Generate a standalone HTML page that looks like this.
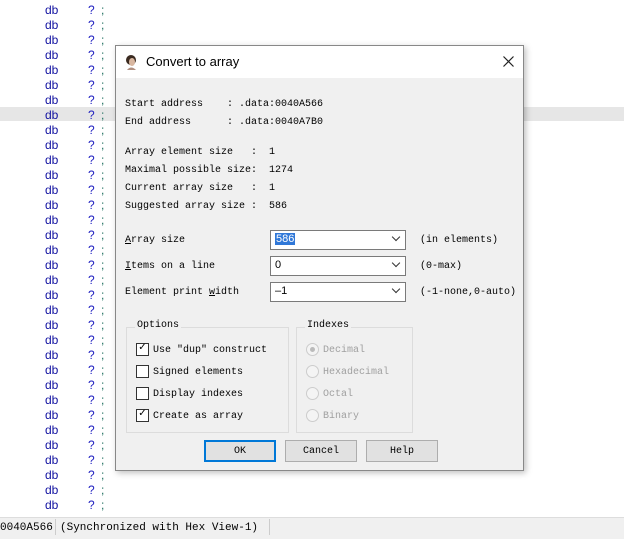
<!DOCTYPE html>
<html><head><style>
body{margin:0;width:624px;height:538px;background:#fff;position:relative;overflow:hidden;font-family:"Liberation Mono",monospace;}
.r{position:absolute;left:0;width:624px;height:15px;font:12px "Liberation Sans",sans-serif;}
.r span{position:absolute;top:1px}
.a{position:absolute;font-size:10px;color:#000;white-space:pre}
.dlg{position:absolute;left:115px;top:45px;width:407px;height:424px;background:#f0f0f0;border:1px solid #888;box-shadow:2px 2px 6px rgba(0,0,0,.25)}
.tb{position:absolute;left:0;top:0;width:407px;height:32px;background:#fff}
.cb{position:absolute;left:154px;width:134px;height:18px;background:#fff;border:1px solid #7a7a7a}
.cb i{position:absolute;right:6px;top:3px;width:5px;height:5px;border-right:1px solid #333;border-bottom:1px solid #333;transform:rotate(45deg)}
.grp{position:absolute;border:1px solid #dcdcdc}
.grp b{position:absolute;top:-8px;left:8px;background:#f0f0f0;font-weight:normal;font-size:10px;padding:0 2px}
.ck{position:absolute;width:11px;height:11px;border:1px solid #333;background:#fff}
.rd{position:absolute;width:11px;height:11px;border:1px solid #ccc;border-radius:50%;background:#f4f4f4}
.btn{position:absolute;top:394px;width:70px;height:20px;border:1px solid #adadad;background:#e1e1e1;text-align:center;line-height:22px;font-size:10px}
</style></head><body>
<div style="position:absolute;left:0;top:107px;width:624px;height:14px;background:#e6e6e6"></div>
<div id="rows"></div>
<script>
var h='';for(var i=0;i<34;i++){h+='<div class="r" style="top:'+(2+i*15)+'px"><span style="left:45px;color:#1010a0">db</span><span style="left:88px;color:#2020c0">?</span><span style="left:101px;color:#207060">;</span></div>';}
document.getElementById('rows').innerHTML=h;
</script>
<div style="position:absolute;left:0;top:517px;width:624px;height:21px;background:#f0f0f0;border-top:1px solid #ddd"></div>
<div class="a" style="left:0;top:522px;font-size:11px">0040A566</div>
<div style="position:absolute;left:55px;top:519px;width:1px;height:16px;background:#ccc"></div>
<div class="a" style="left:60px;top:522px;font-size:11px">(Synchronized with Hex View-1)</div>
<div style="position:absolute;left:269px;top:519px;width:1px;height:16px;background:#ccc"></div>

<div class="dlg">
<div class="tb">
<svg style="position:absolute;left:8px;top:8px" width="14" height="16"><ellipse cx="7" cy="6" rx="5" ry="5" fill="#3a2a20"/><ellipse cx="8" cy="8" rx="3" ry="4" fill="#d9b7a0"/><path d="M3 16 Q7 11 12 16Z" fill="#b08f80"/></svg>
<div style="position:absolute;left:30px;top:8px;font:13px 'Liberation Sans',sans-serif">Convert to array</div>
<svg style="position:absolute;left:387px;top:10px" width="11" height="11"><path d="M0.5 0.5L10.5 10.5M10.5 0.5L0.5 10.5" stroke="#222" stroke-width="1.2"/></svg>
</div>
<div class="a" style="left:9px;top:53px">Start address    : .data:0040A566</div>
<div class="a" style="left:9px;top:71px">End address      : .data:0040A7B0</div>
<div class="a" style="left:9px;top:101px">Array element size   :  1</div>
<div class="a" style="left:9px;top:119px">Maximal possible size:  1274</div>
<div class="a" style="left:9px;top:137px">Current array size   :  1</div>
<div class="a" style="left:9px;top:155px">Suggested array size :  586</div>
<div class="a" style="left:9px;top:189px"><u>A</u>rray size</div>
<div class="a" style="left:9px;top:215px"><u>I</u>tems on a line</div>
<div class="a" style="left:9px;top:241px">Element print <u>w</u>idth</div>
<div class="cb" style="top:184px"><span style="position:absolute;left:4px;top:2px;background:#3078d8;color:#fff;font:11px 'Liberation Sans',sans-serif;padding:0 1px">586</span><i></i></div>
<div class="cb" style="top:210px"><span style="position:absolute;left:4px;top:2px;font:11px 'Liberation Sans',sans-serif">0</span><i></i></div>
<div class="cb" style="top:236px"><span style="position:absolute;left:4px;top:2px;font:11px 'Liberation Sans',sans-serif">–1</span><i></i></div>
<div class="a" style="left:304px;top:189px">(in elements)</div>
<div class="a" style="left:304px;top:215px">(0-max)</div>
<div class="a" style="left:304px;top:241px">(-1-none,0-auto)</div>
<div class="grp" style="left:10px;top:281px;width:161px;height:104px"><b>Options</b></div>
<div class="grp" style="left:180px;top:281px;width:115px;height:104px"><b>Indexes</b></div>
<div class="ck" style="left:20px;top:297px;font-size:10px;line-height:10px;text-align:center">✓</div>
<div class="ck" style="left:20px;top:319px"></div>
<div class="ck" style="left:20px;top:341px"></div>
<div class="ck" style="left:20px;top:363px;font-size:10px;line-height:10px;text-align:center">✓</div>
<div class="a" style="left:37px;top:299px">Use "dup" construct</div>
<div class="a" style="left:37px;top:321px">Signed elements</div>
<div class="a" style="left:37px;top:343px">Display indexes</div>
<div class="a" style="left:37px;top:365px">Create as array</div>
<div class="rd" style="left:190px;top:297px"><div style="margin:3px;width:5px;height:5px;border-radius:50%;background:#bbb"></div></div>
<div class="rd" style="left:190px;top:319px"></div>
<div class="rd" style="left:190px;top:341px"></div>
<div class="rd" style="left:190px;top:363px"></div>
<div class="a" style="left:207px;top:299px;color:#a0a0a0">Decimal</div>
<div class="a" style="left:207px;top:321px;color:#a0a0a0">Hexadecimal</div>
<div class="a" style="left:207px;top:343px;color:#a0a0a0">Octal</div>
<div class="a" style="left:207px;top:365px;color:#a0a0a0">Binary</div>
<div class="btn" style="left:88px;border:1px solid #0078d7;box-shadow:inset 0 0 0 1px #0078d7">OK</div>
<div class="btn" style="left:169px">Cancel</div>
<div class="btn" style="left:250px">Help</div>
</div>
</body></html>
